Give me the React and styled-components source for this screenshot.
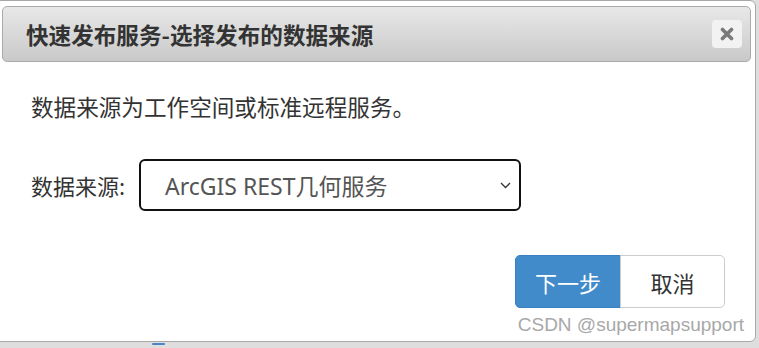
import styled, { createGlobalStyle } from 'styled-components';

const GlobalStyle = createGlobalStyle`
  html, body {
    margin: 0;
    padding: 0;
    background: #dedede;
    overflow: hidden;
  }
  body {
    font-family: "Noto Sans", "Noto Sans CJK SC", sans-serif;
  }
`;

const Page = styled.div`
  width: 759px;
  height: 348px;
  position: relative;
  background: #dedede;
`;

const Dialog = styled.div`
  box-sizing: border-box;
  width: 758px;
  height: 342px;
  margin-left: -2px;
  padding: 5px 4px 0 3px;
  background: #fff;
  border: 1px solid #a8a8a8;
  border-radius: 0 6px 6px 0;
  display: flex;
  flex-direction: column;
`;

const Header = styled.div`
  box-sizing: border-box;
  height: 56px;
  padding: 0 8px 0 23px;
  border: 1px solid #aaa;
  border-radius: 5px;
  background: linear-gradient(to bottom, #e8e8e8 0%, #c9c9c9 100%);
  display: flex;
  align-items: center;
  justify-content: space-between;
`;

const Title = styled.h1`
  margin: 0;
  font-size: 22.6px;
  font-weight: bold;
  color: #333;
  font-family: "Noto Sans CJK SC", sans-serif;
`;

const CloseButton = styled.button`
  width: 30px;
  height: 28px;
  padding: 0;
  border: none;
  border-radius: 4px;
  background: #f2f2f2;
  display: flex;
  align-items: center;
  justify-content: center;
  cursor: pointer;
`;

const Body = styled.div`
  flex: 1;
  padding: 0 27px 0 29px;
  display: flex;
  flex-direction: column;
  font-family: "Noto Sans CJK SC", sans-serif;
  color: #333;
`;

const Intro = styled.p`
  margin: 30px 0 0;
  font-size: 22.6px;
  line-height: 30px;
`;

const Row = styled.div`
  margin-top: 37px;
  display: flex;
  align-items: center;
`;

const Label = styled.label`
  font-size: 22px;
  width: 108px;
`;

const SelectBox = styled.div`
  box-sizing: border-box;
  width: 382px;
  height: 52px;
  border: 2px solid #111;
  border-radius: 6px;
  padding: 0 8px 0 24px;
  display: flex;
  align-items: center;
  justify-content: space-between;
  font-family: "Noto Sans", "Noto Sans CJK SC", sans-serif;
  font-size: 23px;
  color: #555;
`;

const Footer = styled.div`
  margin-top: 44px;
  display: flex;
  justify-content: flex-end;
  margin-right: -1px;
`;

const Button = styled.button`
  box-sizing: border-box;
  width: ${(p) => (p.$primary ? '106px' : '105px')};
  height: 53px;
  font-family: "Noto Sans CJK SC", sans-serif;
  font-size: 22px;
  border: 1px solid ${(p) => (p.$primary ? '#3a80c0' : '#ccc')};
  background: ${(p) => (p.$primary ? '#428bca' : '#fff')};
  color: ${(p) => (p.$primary ? '#fff' : '#333')};
  border-radius: ${(p) => (p.$primary ? '5px 0 0 5px' : '0 5px 5px 0')};
  margin-left: ${(p) => (p.$primary ? '0' : '-1px')};
  cursor: pointer;
`;

const Watermark = styled.div`
  margin-top: 6px;
  margin-right: -20px;
  text-align: right;
  font-family: "Liberation Sans", Arial, sans-serif;
  font-size: 19px;
  color: #a8a8a8;
`;

const Marker = styled.div`
  position: absolute;
  left: 152px;
  bottom: 3px;
  width: 13px;
  height: 2px;
  border-radius: 1px;
  background: #4a86c5;
`;

export default function App() {
  return (
    <Page>
      <GlobalStyle />
      <Dialog>
        <Header>
          <Title>快速发布服务-选择发布的数据来源</Title>
          <CloseButton aria-label="close">
            <svg width="14" height="14" viewBox="0 0 14 14">
              <path d="M2.5 2.5 L11.5 11.5 M11.5 2.5 L2.5 11.5" stroke="#7a7a7a" strokeWidth="3.6" strokeLinecap="round" />
            </svg>
          </CloseButton>
        </Header>
        <Body>
          <Intro>数据来源为工作空间或标准远程服务。</Intro>
          <Row>
            <Label>数据来源:</Label>
            <SelectBox>
              <span>ArcGIS REST几何服务</span>
              <svg width="11" height="7" viewBox="0 0 11 7">
                <path d="M1 1 L5.5 5.5 L10 1" fill="none" stroke="#333" strokeWidth="1.3" />
              </svg>
            </SelectBox>
          </Row>
          <Footer>
            <Button $primary>下一步</Button>
            <Button>取消</Button>
          </Footer>
          <Watermark>CSDN @supermapsupport</Watermark>
        </Body>
      </Dialog>
      <Marker />
    </Page>
  );
}
